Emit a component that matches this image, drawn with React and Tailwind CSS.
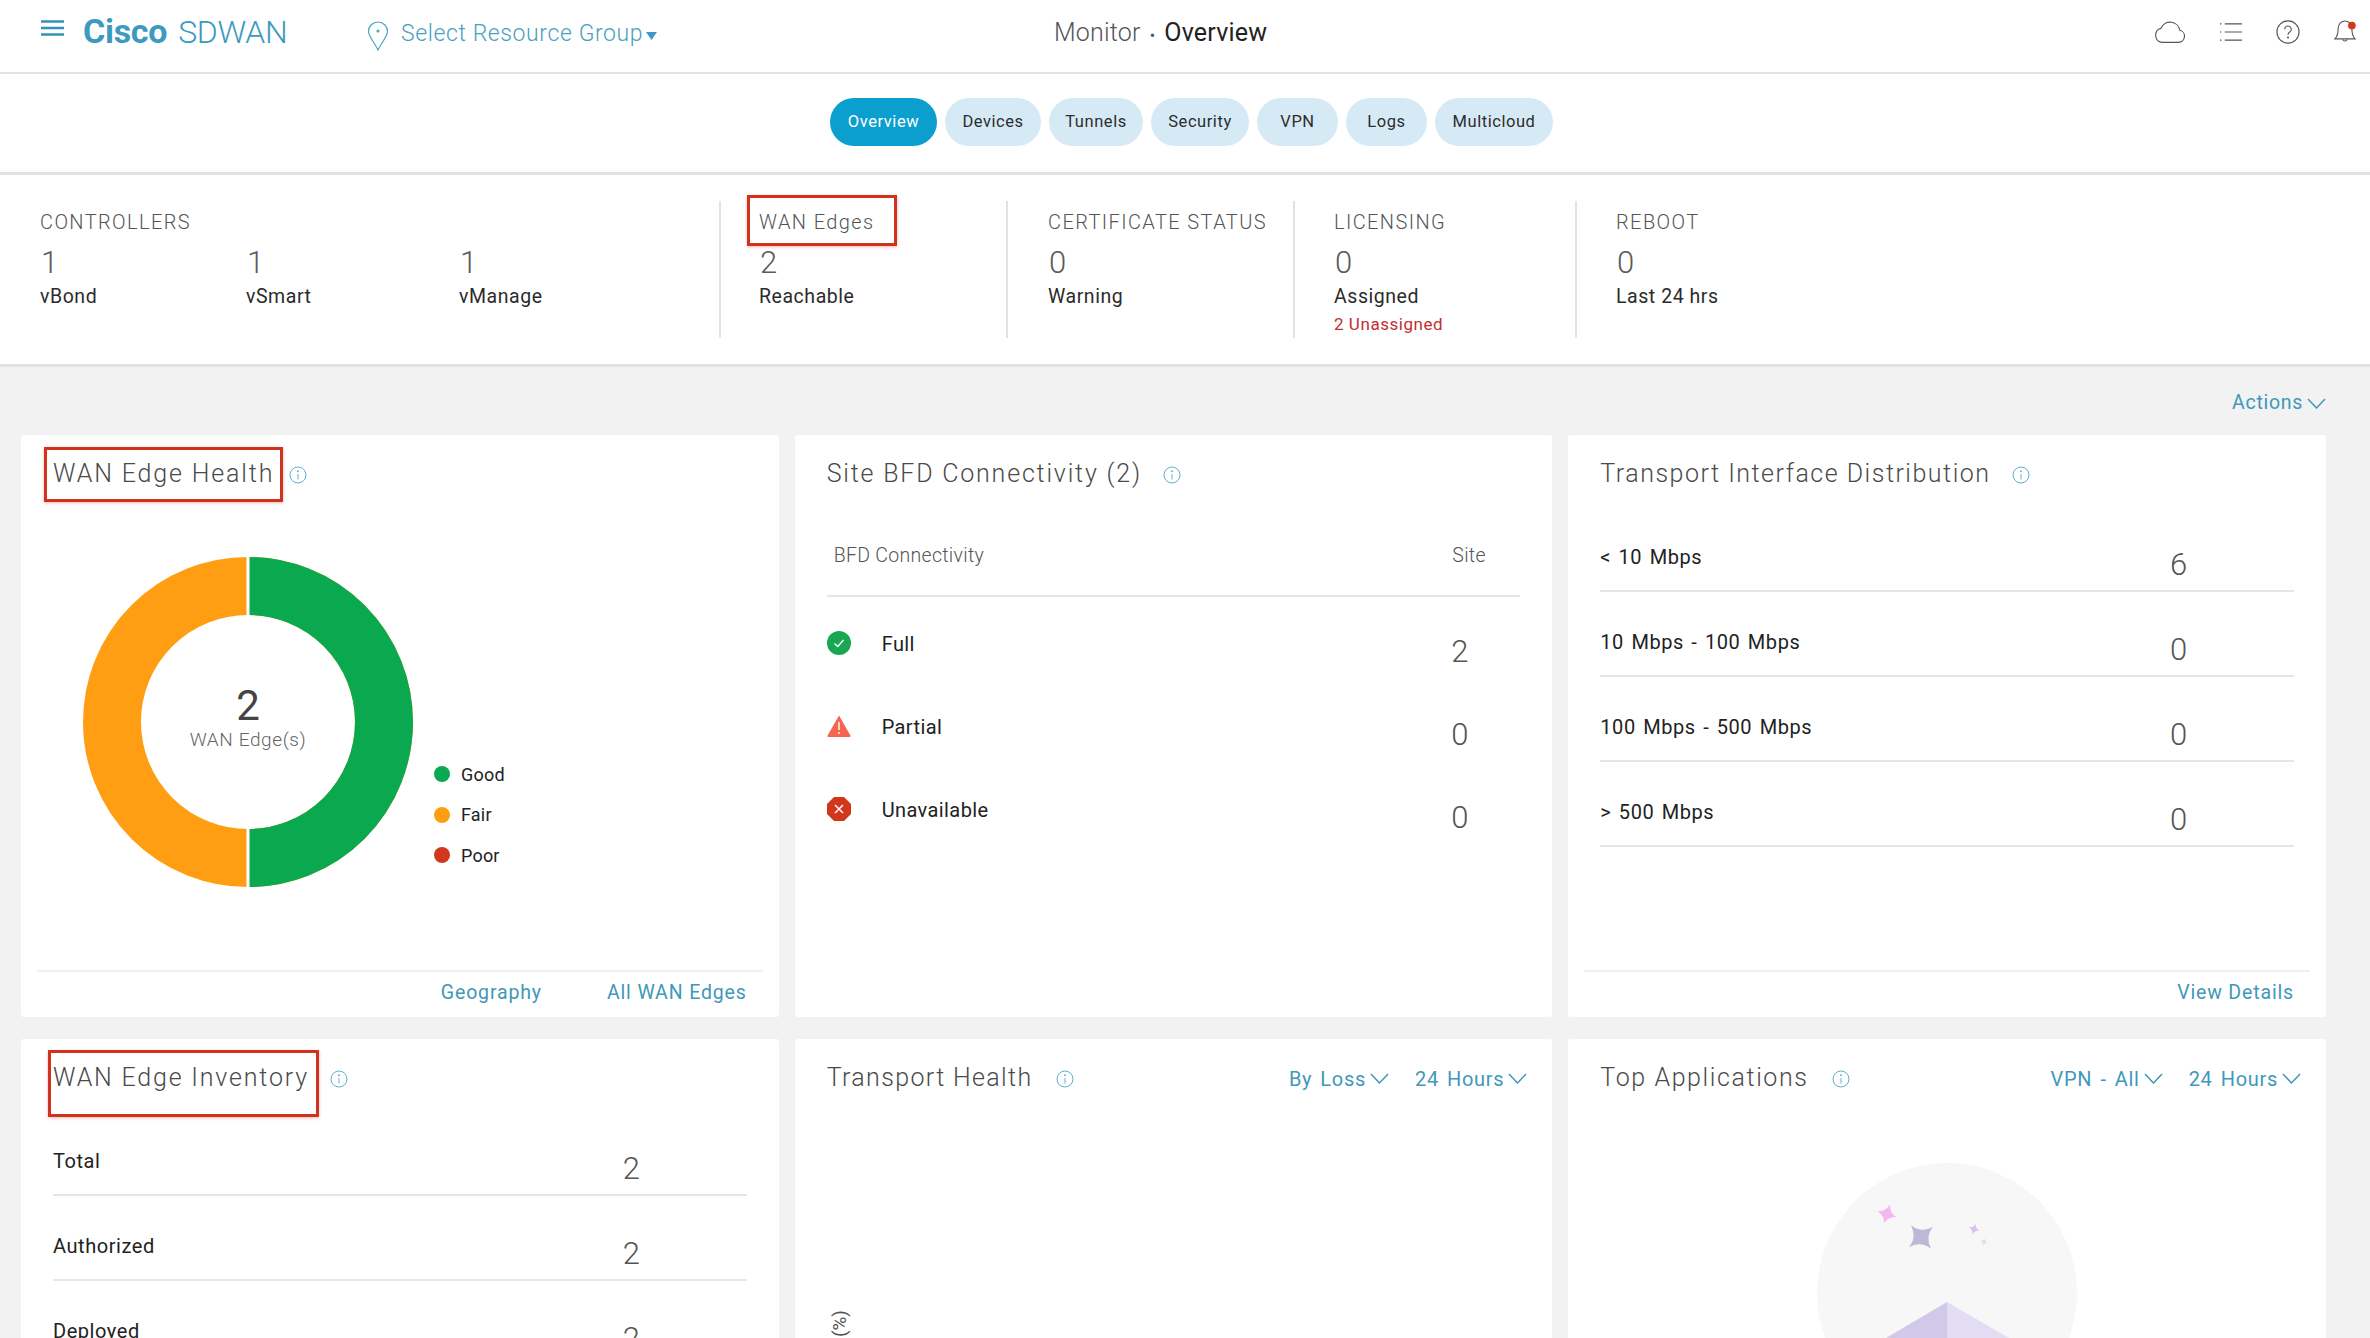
import React from "react";

const Chevron = ({ className = "" }) => (
  <svg viewBox="0 0 19 11" className={`w-[19px] h-[11px] ${className}`} fill="none" stroke="currentColor" strokeWidth="1.5">
    <polyline points="1,1 9.5,10 18,1" />
  </svg>
);

const Info = () => (
  <svg viewBox="0 0 18 18" className="w-[18px] h-[18px] shrink-0" fill="none" stroke="#62b0d0" strokeWidth="1">
    <circle cx="9" cy="9" r="8" />
    <line x1="9" y1="8" x2="9" y2="13.5" />
    <circle cx="9" cy="5.3" r="0.6" fill="#62b0d0" />
  </svg>
);

const RedBox = ({ className }) => (
  <span className={`absolute border-[3px] border-[#d0321e] shadow-[0_1px_3px_rgba(208,50,30,0.35)] ${className}`} />
);

const Title = ({ children, box, gap = "gap-[21px]", track = "tracking-[1.55px]", right }) => (
  <div className={`flex items-center h-[55px] mt-[12px] ${gap}`}>
    <div className={`relative mb-[2px] text-[25px] leading-[32px] ${track} text-[#4a4a4a] font-light whitespace-nowrap`}>
      {children}
      {box}
    </div>
    <Info />
    {right && <div className="ml-auto flex items-center gap-[26px] -mr-[7px] text-[20px] text-[#3f98b9] [word-spacing:2.5px]">{right}</div>}
  </div>
);

const Drop = ({ children }) => (
  <span className="flex items-center gap-[4px] whitespace-nowrap tracking-[0.7px]">
    {children}
    <Chevron />
  </span>
);

const Stat = ({ value, label, extra, w = "" }) => (
  <div className={w}>
    <div className="text-[31px] leading-[40px] font-light text-[#5a5a5a] mt-[9px] pl-[1px]">{value}</div>
    <div className="text-[19.5px] leading-[26px] text-[#2b2b2b] mt-[1px] tracking-[0.55px]">{label}</div>
    {extra && <div className="text-[17px] leading-[20px] text-[#bf2f2f] mt-[4px] tracking-[0.55px]">{extra}</div>}
  </div>
);

const StatTitle = ({ children, box }) => (
  <div className="relative text-[20px] leading-[24px] tracking-[1.4px] text-[#555] font-light whitespace-nowrap">
    {children}
    {box}
  </div>
);

const Num = ({ children }) => (
  <div className="text-[31px] leading-[38px] font-light text-[#555]">{children}</div>
);

const KvRow = ({ label, value }) => (
  <div className="flex items-end justify-between h-[85px] border-b-2 border-[#e6e6e6]">
    <div className="text-[20px] leading-[24px] mb-[21px] text-[#222] tracking-[0.55px] [word-spacing:2px]">{label}</div>
    <div className="w-[124px] mb-[6px]">
      <Num>{value}</Num>
    </div>
  </div>
);

const Full = () => (
  <svg viewBox="0 0 24 24" className="w-[24px] h-[24px]">
    <circle cx="12" cy="12" r="12" fill="#17a851" />
    <polyline points="7.5,12.5 10.8,15.5 16.5,9" fill="none" stroke="#fff" strokeWidth="1.4" />
  </svg>
);
const Partial = () => (
  <svg viewBox="0 0 24 24" className="w-[24px] h-[24px]">
    <path d="M12 1.5 L23.4 21.5 Q24 23 22.5 23 L1.5 23 Q0 23 0.6 21.5 Z" fill="#f3664f" />
    <line x1="12" y1="8" x2="12" y2="16" stroke="#fff" strokeWidth="1.4" />
    <circle cx="12" cy="19" r="0.9" fill="#fff" />
  </svg>
);
const Unavail = () => (
  <svg viewBox="0 0 24 24" className="w-[24px] h-[24px]">
    <path d="M7 0 H17 L24 7 V17 L17 24 H7 L0 17 V7 Z" fill="#d0371c" />
    <path d="M8 8 L16 16 M16 8 L8 16" stroke="#fff" strokeWidth="1.5" />
  </svg>
);

const BfdRow = ({ icon, label, value }) => (
  <div className="flex items-center h-[83px]">
    <div className="w-[55px] flex">{icon}</div>
    <div className="flex-1 mt-[2px] text-[20px] text-[#222] tracking-[0.4px]">{label}</div>
    <div className="w-[69px] mt-[18px]">
      <Num>{value}</Num>
    </div>
  </div>
);

const Footer = ({ children }) => (
  <div className="mt-auto mx-[-16px] h-[47px] pb-[3px] border-t-2 border-[#efefef] flex items-center justify-end gap-[65px] pr-[16px] text-[19.5px] text-[#3f98b9] tracking-[0.85px]">
    {children}
  </div>
);

const Card = ({ children, className = "h-[582px]" }) => (
  <section className={`bg-white rounded-[3px] px-[32px] flex flex-col ${className}`}>{children}</section>
);

const Legend = ({ color, label }) => (
  <div className="flex items-center h-[40.5px] gap-[11px]">
    <span className={`w-[16px] h-[16px] rounded-full ${color}`} />
    <span className="text-[18px] text-[#222] tracking-[0.2px]">{label}</span>
  </div>
);

const star = "M0 -10 Q1.5 -2 10 0 Q2 1.5 0 10 Q-1.5 2 -10 0 Q-2 -1.5 0 -10 Z";

const tabs = [
  ["Overview", "w-[107px] bg-[#0b9fd0] text-white"],
  ["Devices", "w-[96px] bg-[#d6eaf6] text-[#2d2d2d]"],
  ["Tunnels", "w-[94px] bg-[#d6eaf6] text-[#2d2d2d]"],
  ["Security", "w-[98px] bg-[#d6eaf6] text-[#2d2d2d]"],
  ["VPN", "w-[81px] bg-[#d6eaf6] text-[#2d2d2d]"],
  ["Logs", "w-[81px] bg-[#d6eaf6] text-[#2d2d2d]"],
  ["Multicloud", "w-[118px] bg-[#d6eaf6] text-[#2d2d2d]"],
];

export default function App() {
  return (
    <div className="w-[2370px] h-[1338px] overflow-hidden bg-[#f2f2f2] font-['Roboto',sans-serif]">
      {/* top bar */}
      <header className="h-[74px] bg-white border-b-2 border-[#e3e3e3] shadow-[0_1px_2px_rgba(0,0,0,0.06)] grid grid-cols-[1054px_1fr_auto] items-center pr-[14px]">
        <div className="flex items-center pl-[41px]">
          <svg viewBox="0 0 23 16" className="w-[23px] h-[16px] -mt-[17px]" fill="none" stroke="#2f92b6" strokeWidth="2.6">
            <path d="M0 1.5H23M0 8H23M0 14.5H23" />
          </svg>
          <div className="ml-[19px] w-[284px] -mt-[4px] leading-[40px] text-[#3c9ac0] whitespace-nowrap">
            <span className="font-bold text-[34px] tracking-[-0.3px]">Cisco</span>
            <span className="ml-[11px] font-light text-[32px] tracking-[-0.3px]">SDWAN</span>
          </div>
          <svg viewBox="0 0 22 30" className="w-[22px] h-[30px]" fill="none" stroke="#4da3c2" strokeWidth="1.2">
            <path d="M11 29 C7 21 1.5 15 1.5 10.5 A9.5 9.5 0 0 1 20.5 10.5 C20.5 15 15 21 11 29 Z" />
            <circle cx="11" cy="10" r="1" fill="#4da3c2" />
          </svg>
          <div className="ml-[12px] -mt-[4px] text-[23px] text-[#4aa0c0] font-light tracking-[0.6px] whitespace-nowrap">Select Resource Group</div>
          <svg viewBox="0 0 11 8" className="ml-[3px] w-[11px] h-[8px]">
            <path d="M0 0 H11 L5.5 8 Z" fill="#3c9ac0" />
          </svg>
        </div>
        <div className="text-[25px] whitespace-nowrap tracking-[0.2px] -mt-[6px]">
          <span className="text-[#555] font-light">Monitor</span>
          <span className="text-[#555] mx-[9px] text-[16px]">•</span>
          <span className="text-[#222]">Overview</span>
        </div>
        <div className="flex items-center gap-[34px] -mt-[9px]">
          <svg viewBox="0 0 34 26" className="w-[32px] h-[25px]" fill="none" stroke="#555" strokeWidth="1.2">
            <path d="M8 24.5 H26 A6.5 6.5 0 0 0 27.5 11.7 A10.5 10.5 0 0 0 7.5 9.5 A7.7 7.7 0 0 0 8 24.5 Z" />
          </svg>
          <svg viewBox="0 0 23 20" className="w-[22px] h-[20px]" fill="none" stroke="#555" strokeWidth="1.2">
            <path d="M5 1.5H23M5 10H23M5 18.5H23" />
            <path d="M0 1.5H1.5M0 10H1.5M0 18.5H1.5" />
          </svg>
          <svg viewBox="0 0 26 26" className="w-[24px] h-[24px]" fill="none" stroke="#555" strokeWidth="1.2">
            <circle cx="13" cy="13" r="12" />
            <path d="M9.5 10 A3.5 3.5 0 1 1 14.5 13.2 C13.5 13.9 13 14.5 13 16" />
            <circle cx="13" cy="19" r="0.5" fill="#555" />
          </svg>
          <svg viewBox="0 0 24 26" className="w-[22px] h-[25px]" fill="none" stroke="#555" strokeWidth="1.2">
            <path d="M1 21 C4 18 4.5 15 4.5 10 C4.5 5 8 1.5 12 1.5 C16 1.5 19.5 5 19.5 10 C19.5 15 20 18 23 21 Z" />
            <path d="M9.5 21.5 A2.6 2.6 0 0 0 14.5 21.5" />
            <circle cx="19.5" cy="6.5" r="4.2" fill="#cf3a20" stroke="none" />
          </svg>
        </div>
      </header>

      {/* tabs */}
      <nav className="h-[98px] bg-white flex justify-center items-start gap-[8px] pl-[13px] pt-[24px]">
        {tabs.map(([t, c]) => (
          <div key={t} className={`h-[48px] rounded-full flex items-center justify-center text-[16.5px] tracking-[0.55px] ${c}`}>
            {t}
          </div>
        ))}
      </nav>

      {/* summary */}
      <div className="h-[195px] bg-white border-y-[3px] border-[#e2e2e2] flex items-start pt-[26px]">
        <div className="w-[719px] h-[137px] pl-[40px] pt-[9px]">
          <StatTitle>CONTROLLERS</StatTitle>
          <div className="flex">
            <Stat value="1" label="vBond" w="w-[206px]" />
            <Stat value="1" label="vSmart" w="w-[213px]" />
            <Stat value="1" label="vManage" />
          </div>
        </div>
        <div className="w-[287px] h-[137px] border-l-2 border-[#e2e2e2] pl-[38px] pt-[9px]">
          <StatTitle box={<RedBox className="-left-[12px] -top-[15px] w-[150px] h-[51px]" />}>WAN Edges</StatTitle>
          <Stat value="2" label="Reachable" />
        </div>
        <div className="w-[287px] h-[137px] border-l-2 border-[#e2e2e2] pl-[40px] pt-[9px]">
          <StatTitle>CERTIFICATE STATUS</StatTitle>
          <Stat value="0" label="Warning" />
        </div>
        <div className="w-[282px] h-[137px] border-l-2 border-[#e2e2e2] pl-[39px] pt-[9px]">
          <StatTitle>LICENSING</StatTitle>
          <Stat value="0" label="Assigned" extra="2 Unassigned" />
        </div>
        <div className="h-[137px] border-l-2 border-[#e2e2e2] pl-[39px] pt-[9px]">
          <StatTitle>REBOOT</StatTitle>
          <Stat value="0" label="Last 24 hrs" />
        </div>
      </div>

      {/* actions */}
      <div className="h-[68px] pt-[4px] pr-[44px] flex justify-end items-center text-[19.5px] text-[#3f98b9]">
        <Drop>Actions</Drop>
      </div>

      {/* cards */}
      <div className="grid grid-cols-3 gap-x-[16px] gap-y-[22px] pl-[21px] pr-[44px]">
        <Card>
          <Title gap="gap-[15px]" track="tracking-[1.85px]" box={<RedBox className="-left-[9px] -top-[11px] w-[239px] h-[55px]" />}>WAN Edge Health</Title>
          <div className="flex items-start mt-[55px] pl-[30px]">
            <div className="relative w-[330px] h-[330px]">
              <svg viewBox="0 0 330 330" className="w-[330px] h-[330px]">
                <circle cx="165" cy="165" r="136" fill="none" stroke="#ff9e12" strokeWidth="58" />
                <path d="M165 29 A136 136 0 0 1 165 301" fill="none" stroke="#0aa94f" strokeWidth="58" />
                <line x1="165" y1="0" x2="165" y2="330" stroke="#fff" strokeWidth="3" />
              </svg>
              <div className="absolute inset-0 flex flex-col items-center pt-[127px]">
                <div className="text-[42px] leading-[44px] text-[#444]">2</div>
                <div className="text-[19px] leading-[24px] tracking-[0.6px] text-[#666] font-light">WAN Edge(s)</div>
              </div>
            </div>
            <div className="ml-[21px] mt-[197px]">
              <Legend color="bg-[#0aa94f]" label="Good" />
              <Legend color="bg-[#ff9e12]" label="Fair" />
              <Legend color="bg-[#d0371c]" label="Poor" />
            </div>
          </div>
          <Footer>
            <span>Geography</span>
            <span>All WAN Edges</span>
          </Footer>
        </Card>

        <Card>
          <Title track="tracking-[1.8px]">Site BFD Connectivity (2)</Title>
          <div className="flex items-end justify-between h-[95px] pb-[27px] border-b-2 border-[#e6e6e6] pl-[7px] text-[19.5px] leading-[24px] tracking-[0.3px] text-[#555] font-light">
            <span>BFD Connectivity</span>
            <span className="w-[68px]">Site</span>
          </div>
          <div className="mt-[4px]">
            <BfdRow icon={<Full />} label="Full" value="2" />
            <BfdRow icon={<Partial />} label="Partial" value="0" />
            <BfdRow icon={<Unavail />} label="Unavailable" value="0" />
          </div>
        </Card>

        <Card>
          <Title track="tracking-[1.5px]">Transport Interface Distribution</Title>
          <div className="mt-[5px]">
            <KvRow label="< 10 Mbps" value="6" />
            <KvRow label="10 Mbps - 100 Mbps" value="0" />
            <KvRow label="100 Mbps - 500 Mbps" value="0" />
            <KvRow label="> 500 Mbps" value="0" />
          </div>
          <Footer>
            <span>View Details</span>
          </Footer>
        </Card>

        <Card className="h-[600px]">
          <Title track="tracking-[1.8px]" box={<RedBox className="-left-[5px] -top-[12px] w-[271px] h-[67px]" />}>WAN Edge Inventory</Title>
          <div className="mt-[5px]">
            <KvRow label="Total" value="2" />
            <KvRow label="Authorized" value="2" />
            <KvRow label="Deployed" value="2" />
          </div>
        </Card>

        <Card className="h-[600px]">
          <Title gap="gap-[23px]" track="tracking-[1.35px]" right={<><Drop>By Loss</Drop><Drop>24 Hours</Drop></>}>Transport Health</Title>
          <div className="mt-[204px] ml-[4px] w-[18px] [writing-mode:vertical-rl] rotate-180 text-[19px] leading-[18px] text-[#555]">(%)</div>
        </Card>

        <Card className="h-[600px]">
          <Title gap="gap-[23px]" track="tracking-[1.6px]" right={<><Drop>VPN - All</Drop><Drop>24 Hours</Drop></>}>Top Applications</Title>
          <svg viewBox="0 0 260 270" className="mt-[57px] mx-auto w-[260px] h-[270px] shrink-0">
            <circle cx="130" cy="130" r="130" fill="#f7f7f8" />
            <path d={star} transform="translate(70 51) rotate(18) scale(1)" fill="#f2b6f0" />
            <path d={star} transform="translate(104 74) rotate(50) scale(1.55)" fill="#bdb7d8" />
            <path d={star} transform="translate(157 66) rotate(18) scale(0.55)" fill="#d9c2ec" />
            <path d={star} transform="translate(167 79) rotate(18) scale(0.38)" fill="#ead9f2" />
            <path d="M130 139 L69 175 V200 H130 Z" fill="#d2c9e8" />
            <path d="M130 139 L192 175 V200 H130 Z" fill="#e2ddf2" />
          </svg>
        </Card>
      </div>
    </div>
  );
}
